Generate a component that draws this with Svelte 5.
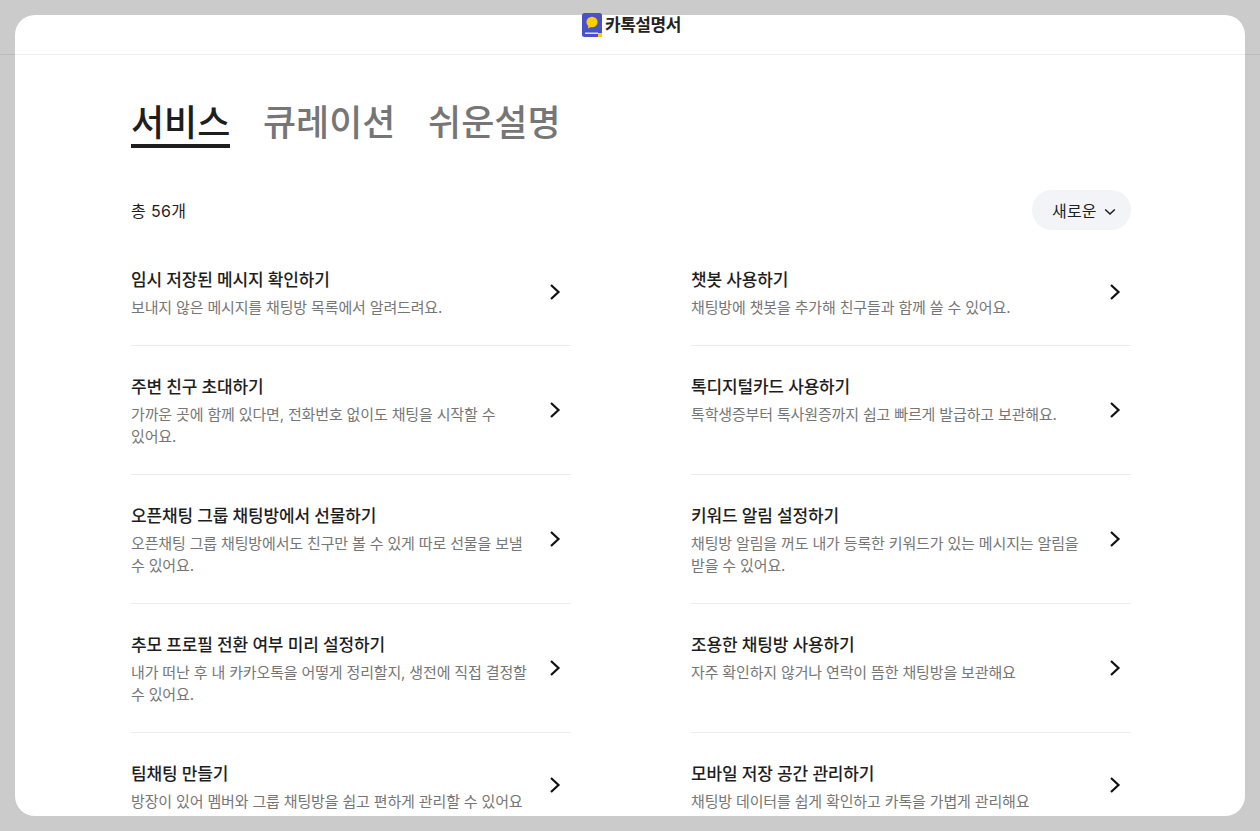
<script>
  const tabs = ['서비스', '큐레이션', '쉬운설명'];
  const items = [
    { t: '임시 저장된 메시지 확인하기', d: '보내지 않은 메시지를 채팅방 목록에서 알려드려요.' },
    { t: '챗봇 사용하기', d: '채팅방에 챗봇을 추가해 친구들과 함께 쓸 수 있어요.' },
    { t: '주변 친구 초대하기', d: '가까운 곳에 함께 있다면, 전화번호 없이도 채팅을 시작할 수 있어요.' },
    { t: '톡디지털카드 사용하기', d: '톡학생증부터 톡사원증까지 쉽고 빠르게 발급하고 보관해요.' },
    { t: '오픈채팅 그룹 채팅방에서 선물하기', d: '오픈채팅 그룹 채팅방에서도 친구만 볼 수 있게 따로 선물을 보낼 수 있어요.' },
    { t: '키워드 알림 설정하기', d: '채팅방 알림을 꺼도 내가 등록한 키워드가 있는 메시지는 알림을 받을 수 있어요.' },
    { t: '추모 프로필 전환 여부 미리 설정하기', d: '내가 떠난 후 내 카카오톡을 어떻게 정리할지, 생전에 직접 결정할 수 있어요.' },
    { t: '조용한 채팅방 사용하기', d: '자주 확인하지 않거나 연락이 뜸한 채팅방을 보관해요' },
    { t: '팀채팅 만들기', d: '방장이 있어 멤버와 그룹 채팅방을 쉽고 편하게 관리할 수 있어요' },
    { t: '모바일 저장 공간 관리하기', d: '채팅방 데이터를 쉽게 확인하고 카톡을 가볍게 관리해요' }
  ];
</script>

<div class="shell">
  <header class="topbar">
    <div class="brand">
      <svg class="logo" width="20" height="24" viewBox="0 0 20 24" aria-hidden="true">
        <rect width="20" height="24" rx="2.5" fill="#4a52c9"/>
        <rect x="3" y="19.6" width="13" height="1.2" fill="#fff"/>
        <ellipse cx="10" cy="9" rx="5.6" ry="5.2" fill="#ffcd00"/>
        <path d="M6.5 12L6 15.5L10 13.5Z" fill="#ffcd00"/>
        <rect x="16" y="20" width="4" height="4" fill="#ffcd00"/>
      </svg>
      <span>카톡설명서</span>
    </div>
  </header>

  <main class="sheet">
    <div class="content">
      <nav class="tabs">
        {#each tabs as tab, i}
          <span class="tab" class:active={i === 0}>{tab}</span>
        {/each}
      </nav>

      <div class="toolbar">
        <span class="total">총 56개</span>
        <button class="sort" type="button">
          <span>새로운</span>
          <svg width="12" height="8" viewBox="0 0 12 8" aria-hidden="true">
            <path d="M1.2 1.5L6 6L10.8 1.5" fill="none" stroke="#1e1e1e" stroke-width="1.6"/>
          </svg>
        </button>
      </div>

      <ul class="grid">
        {#each items as item}
          <li class="item">
            <div class="text">
              <h3>{item.t}</h3>
              <p>{item.d}</p>
            </div>
            <svg class="chev" width="12" height="18" viewBox="0 0 12 18" aria-hidden="true">
              <path d="M2 2L9.5 9L2 16" fill="none" stroke="#111" stroke-width="2.2"/>
            </svg>
          </li>
        {/each}
      </ul>
    </div>
  </main>
</div>

<style>
  :global(body) {
    background: #cbcbcb;
    font-family: Inter, "Noto Sans CJK KR", sans-serif;
    color: #1e1e1e;
  }
  .shell {
    position: relative;
    box-sizing: border-box;
    height: 831px;
    padding: 15px;
    overflow: hidden;
  }
  .topbar {
    position: absolute;
    inset: 0 0 auto 0;
    height: 55px;
    box-sizing: border-box;
    border-bottom: 1px solid rgba(0, 0, 0, 0.07);
    display: flex;
    justify-content: center;
    z-index: 2;
  }
  .brand {
    display: flex;
    align-items: flex-start;
    gap: 3px;
    padding-top: 13px;
    margin-left: 3px;
  }
  .brand span {
    font-size: 17px;
    line-height: 24px;
    font-weight: 700;
    letter-spacing: -0.4px;
    color: #222;
  }
  .logo { display: block; }
  .sheet {
    height: 801px;
    background: #fff;
    border-radius: 20px;
    overflow: hidden;
  }
  .content {
    padding: 80px 114px 0 116px;
  }
  .tabs {
    display: flex;
    gap: 32.6px;
    height: 53px;
  }
  .tab {
    font-size: 36px;
    line-height: 42px;
    padding-top: 7px;
    font-weight: 500;
    color: #767676;
    height: 53px;
    box-sizing: border-box;
  }
  .tab.active {
    color: #1e1e1e;
    border-bottom: 4px solid #1e1e1e;
  }
  .toolbar {
    margin-top: 42px;
    height: 40px;
    display: flex;
    align-items: center;
    justify-content: space-between;
  }
  .total {
    font-size: 16px;
    line-height: 22px;
    letter-spacing: 0.35px;
    padding-top: 2px;
  }
  .sort {
    width: 99px;
    height: 40px;
    border: 0;
    border-radius: 20px;
    background: #f3f4f8;
    color: #1e1e1e;
    font: inherit;
    font-size: 16px;
    letter-spacing: 0.2px;
    display: flex;
    align-items: center;
    justify-content: space-between;
    padding: 0 15px 0 20px;
  }
  .sort svg { margin-top: 4px; }
  .grid {
    list-style: none;
    margin: 9px 0 0;
    padding: 0;
    display: grid;
    grid-template-columns: 440px 440px;
    column-gap: 120px;
  }
  .item {
    display: flex;
    align-items: center;
    justify-content: space-between;
    padding: 26px 10px 25px 0;
    border-bottom: 1px solid #ececec;
  }
  .text { width: 396px; align-self: flex-start; }
  h3 {
    margin: 0;
    font-size: 17px;
    line-height: 30px;
    font-weight: 500;
    letter-spacing: -0.01em;
    color: #1e1e1e;
  }
  p {
    margin: 2px 0 0;
    font-size: 15px;
    line-height: 22.5px;
    letter-spacing: -0.01em;
    color: #767676;
    word-break: keep-all;
  }
  .chev { display: block; flex: none; margin-bottom: 1px; }
</style>
